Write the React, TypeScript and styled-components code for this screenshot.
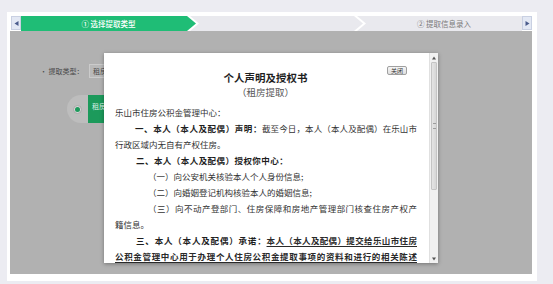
import styled, { createGlobalStyle } from "styled-components";

const GlobalStyle = createGlobalStyle`
  html, body {
    margin: 0;
    padding: 0;
  }
  body {
    background: #ececf2;
    font-family: "Noto Sans CJK SC", "Noto Sans", sans-serif;
    text-spacing-trim: space-all;
  }
`;

const Page = styled.div`
  width: 553px;
  height: 284px;
  box-sizing: border-box;
  padding: 12px 16px 3px 7px;
  background: #ececf2;
  overflow: hidden;
`;

const Panel = styled.div`
  height: 100%;
  box-sizing: border-box;
  padding: 4px 5px 7px 3px;
  background: #fff;
  display: flex;
  flex-direction: column;
`;

const TabBar = styled.div`
  display: flex;
  height: 15px;
`;

const ArrowBtn = styled.div<{ $side: "left" | "right" }>`
  width: 10px;
  height: 14px;
  margin-left: ${(p) => (p.$side === "left" ? "1px" : "0")};
  box-sizing: border-box;
  border: 1px solid #c9d0e2;
  background: #e3e8f4;
  display: flex;
  align-items: center;
  justify-content: center;
`;

const Steps = styled.div`
  flex: 1;
  display: flex;
  background: #e9e9ee;
`;

const chevron = `polygon(0 0, calc(100% - 9px) 0, 100% 50%, calc(100% - 9px) 100%, 0 100%)`;

const SegmentEdge = styled.div<{ $w: number }>`
  width: ${(p) => p.$w + 3}px;
  height: 15px;
  background: #fff;
  clip-path: ${chevron};
  flex-shrink: 0;
`;

const SegmentFill = styled.div<{ $w: number; $active?: boolean }>`
  width: ${(p) => p.$w}px;
  height: 15px;
  background: ${(p) => (p.$active ? "#1fbd76" : "#e9e9ee")};
  clip-path: ${chevron};
  display: flex;
  align-items: center;
  justify-content: center;
  color: #fff;
  font-size: 7.5px;
  font-weight: 500;
`;

const StepLabel = styled.div`
  flex: 1;
  display: flex;
  align-items: center;
  justify-content: center;
  color: #7a7a7a;
  font-size: 7.5px;
`;

const Content = styled.div`
  position: relative;
  height: 243px;
  background: #b1b1b1;
`;

const Form = styled.div`
  padding: 33px 0 0 30px;
`;

const FieldRow = styled.div`
  display: flex;
  align-items: center;
  height: 14px;
`;

const FieldLabel = styled.div`
  width: 49px;
  font-size: 7px;
  color: #4a4a4a;
`;

const SelectBox = styled.div`
  width: 70px;
  height: 14px;
  box-sizing: border-box;
  border: 1px solid #cbcbcb;
  background: #b9b9b9;
  font-size: 7px;
  color: #4a4a4a;
  padding-left: 3px;
  line-height: 12px;
`;

const RadioCard = styled.div`
  display: flex;
  margin: 17px 0 0 27px;
  height: 28px;
`;

const RadioHolder = styled.div`
  width: 21px;
  background: #bdbdbd;
  border-radius: 14px 0 0 14px;
  display: flex;
  align-items: center;
  justify-content: center;
`;

const RadioDot = styled.div`
  width: 9px;
  height: 9px;
  box-sizing: border-box;
  border-radius: 50%;
  border: 1px solid #a9a9a9;
  background: #d6d6d6;
  display: flex;
  align-items: center;
  justify-content: center;

  &::after {
    content: "";
    width: 5px;
    height: 5px;
    border-radius: 50%;
    background: #1d9a5c;
  }
`;

const RadioText = styled.div`
  width: 60px;
  background: #1c9a5b;
  color: #d9eee3;
  font-size: 7px;
  padding: 6px 0 0 4px;
`;

const Modal = styled.div`
  position: absolute;
  left: 94px;
  top: 22px;
  width: 334px;
  height: 210px;
  background: #fff;
  display: flex;
  box-shadow: 0 1px 4px rgba(0, 0, 0, 0.35);
`;

const ModalBody = styled.div`
  position: relative;
  flex: 1;
  overflow: hidden;
  padding: 18px 13px 0 11px;
`;

const CloseButton = styled.div`
  position: absolute;
  top: 13px;
  right: 22px;
  width: 20px;
  height: 9px;
  box-sizing: border-box;
  border: 1px solid #a0a0a0;
  border-radius: 2px;
  background: linear-gradient(#f6f6f6, #dedede);
  font-size: 6px;
  line-height: 7px;
  text-align: center;
  color: #333;
`;

const Title = styled.div`
  text-align: center;
  font-size: 10.5px;
  line-height: 14px;
  font-weight: 700;
  color: #1e1e1e;
`;

const SubTitle = styled.div`
  margin-top: 1px;
  text-align: center;
  font-size: 9.5px;
  line-height: 12px;
  color: #555;
`;

const Letter = styled.div`
  margin-top: 6px;
  width: 302px;
  font-size: 8.5px;
  line-height: 16px;
  color: #333;
`;

const Line = styled.div<{ $indent?: number; $full?: boolean }>`
  padding-left: ${(p) => p.$indent ?? 0}px;
  white-space: nowrap;
  text-align: ${(p) => (p.$full ? "justify" : "left")};
  text-align-last: ${(p) => (p.$full ? "justify" : "left")};
`;

const Strong = styled.b`
  font-weight: 700;
  letter-spacing: 0.45px;
  color: #1e1e1e;
`;

const Pledge = styled.span`
  font-weight: 700;
  color: #2a2a2a;
  text-decoration: underline;
  text-underline-offset: 2px;
`;

const ScrollBar = styled.div`
  width: 8px;
  background: #f1f1f1;
  border-left: 1px solid #e0e0e0;
  display: flex;
  flex-direction: column;
`;

const ScrollButton = styled.div`
  height: 9px;
  display: flex;
  align-items: center;
  justify-content: center;
`;

const Thumb = styled.div`
  height: 128px;
  margin: 0 1px;
  box-sizing: border-box;
  border: 1px solid #c4c4c4;
  border-radius: 1px;
  background: linear-gradient(90deg, #e4e4e4, #d6d6d6);
  display: flex;
  align-items: center;
  justify-content: center;

  &::after {
    content: "";
    width: 3px;
    height: 4px;
    border-top: 1px solid #9c9c9c;
    border-bottom: 1px solid #9c9c9c;
  }
`;

const Track = styled.div`
  flex: 1;
`;

function Triangle({ dir, color, size }: { dir: "up" | "down" | "left" | "right"; color: string; size: number }) {
  const pts = {
    up: "0,4 2.5,0 5,4",
    down: "0,0 5,0 2.5,4",
    left: "4,0 4,5 0,2.5",
    right: "0,0 4,2.5 0,5",
  }[dir];
  const vb = dir === "up" || dir === "down" ? "0 0 5 4" : "0 0 4 5";
  return (
    <svg width={size} height={size} viewBox={vb}>
      <polygon points={pts} fill={color} />
    </svg>
  );
}

export default function App() {
  return (
    <Page>
      <GlobalStyle />
      <Panel>
        <TabBar>
          <ArrowBtn $side="left">
            <Triangle dir="left" color="#4a5b8c" size={5} />
          </ArrowBtn>
          <Steps>
            <SegmentEdge $w={175}>
              <SegmentFill $w={175} $active>
                ① 选择提取类型
              </SegmentFill>
            </SegmentEdge>
            <SegmentEdge $w={164}>
              <SegmentFill $w={164} />
            </SegmentEdge>
            <StepLabel>② 提取信息录入</StepLabel>
          </Steps>
          <ArrowBtn $side="right">
            <Triangle dir="right" color="#4a5b8c" size={5} />
          </ArrowBtn>
        </TabBar>

        <Content>
          <Form>
            <FieldRow>
              <FieldLabel>· 提取类型：</FieldLabel>
              <SelectBox>租房提取</SelectBox>
            </FieldRow>
            <RadioCard>
              <RadioHolder>
                <RadioDot />
              </RadioHolder>
              <RadioText>租房提取</RadioText>
            </RadioCard>
          </Form>

          <Modal>
            <ModalBody>
              <CloseButton>关闭</CloseButton>
              <Title>个人声明及授权书</Title>
              <SubTitle>（租房提取）</SubTitle>
              <Letter>
                <Line>乐山市住房公积金管理中心：</Line>
                <Line $indent={20} $full>
                  <Strong>一、本人（本人及配偶）声明：</Strong>截至今日，本人（本人及配偶）在乐山市
                </Line>
                <Line>行政区域内无自有产权住房。</Line>
                <Line $indent={21}>
                  <Strong>二、本人（本人及配偶）授权你中心：</Strong>
                </Line>
                <Line $indent={33}>（一）向公安机关核验本人个人身份信息;</Line>
                <Line $indent={33}>（二）向婚姻登记机构核验本人的婚姻信息;</Line>
                <Line $indent={33} $full>
                  （三）向不动产登部门、住房保障和房地产管理部门核查住房产权产
                </Line>
                <Line>籍信息。</Line>
                <Line $indent={21} $full>
                  <Strong>三、本人（本人及配偶）承诺：</Strong>
                  <Pledge>本人（本人及配偶）提交给乐山市住房</Pledge>
                </Line>
                <Line $full>
                  <Pledge>公积金管理中心用于办理个人住房公积金提取事项的资料和进行的相关陈述</Pledge>
                </Line>
              </Letter>
            </ModalBody>
            <ScrollBar>
              <ScrollButton>
                <Triangle dir="up" color="#555" size={4} />
              </ScrollButton>
              <Thumb />
              <Track />
              <ScrollButton>
                <Triangle dir="down" color="#555" size={4} />
              </ScrollButton>
            </ScrollBar>
          </Modal>
        </Content>
      </Panel>
    </Page>
  );
}
